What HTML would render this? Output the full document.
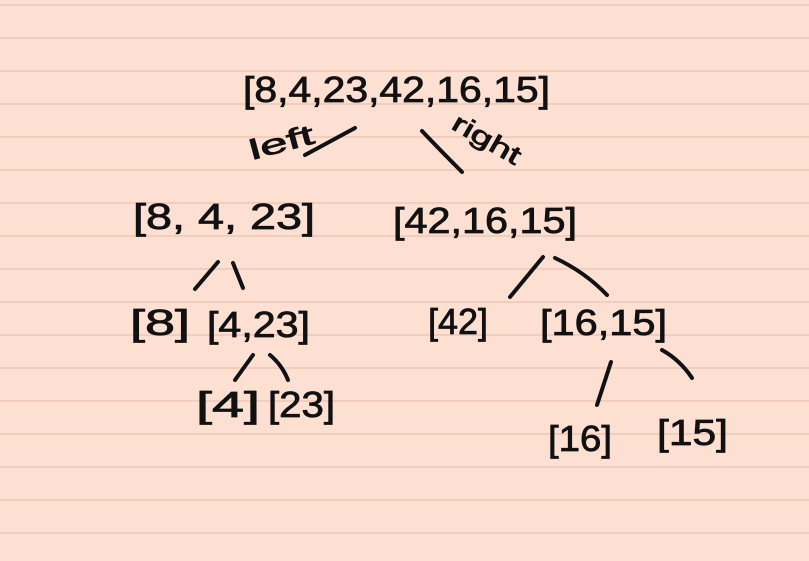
<!DOCTYPE html>
<html><head><style>
html,body{margin:0;padding:0}
body{width:809px;height:561px;overflow:hidden;background:#fde0d2;
background-image:repeating-linear-gradient(to bottom,transparent 0,transparent 4px,#f2cdbe 4px,#f2cdbe 6px,transparent 6px,transparent 33px);}
svg{position:absolute;left:0;top:0}
text{font-family:"Liberation Sans",sans-serif;fill:#111;stroke:#111;stroke-width:0.8}
</style></head><body>
<svg width="809" height="561" viewBox="0 0 809 561">
<g font-size="36">
<text x="243" y="102" textLength="307" lengthAdjust="spacingAndGlyphs">[8,4,23,42,16,15]</text>
<text x="133" y="229" textLength="182" lengthAdjust="spacingAndGlyphs">[8, 4, 23]</text>
<text x="393" y="233" textLength="184" lengthAdjust="spacingAndGlyphs">[42,16,15]</text>
<text x="130" y="335" textLength="60" lengthAdjust="spacingAndGlyphs">[8]</text>
<text x="207" y="337" textLength="103" lengthAdjust="spacingAndGlyphs">[4,23]</text>
<text x="428" y="334" textLength="60" lengthAdjust="spacingAndGlyphs">[42]</text>
<text x="540" y="335" textLength="127" lengthAdjust="spacingAndGlyphs">[16,15]</text>
<text x="196" y="417" textLength="64" lengthAdjust="spacingAndGlyphs">[4]</text>
<text x="268" y="417" textLength="67" lengthAdjust="spacingAndGlyphs">[23]</text>
<text x="548" y="451" textLength="64" lengthAdjust="spacingAndGlyphs">[16]</text>
<text x="657" y="445" textLength="71" lengthAdjust="spacingAndGlyphs">[15]</text>
</g>
<text font-size="28" transform="translate(252,160) rotate(-15)" textLength="66" lengthAdjust="spacingAndGlyphs">left</text>
<text font-size="26" transform="translate(450,128) rotate(30)" textLength="75" lengthAdjust="spacingAndGlyphs">right</text>
<g stroke="#111" stroke-width="4" stroke-linecap="round" fill="none">
<path d="M355 128 L305 155"/>
<path d="M422 131 Q440 150 462 172"/>
<path d="M218 262 L195 289"/>
<path d="M233 263 L243 288"/>
<path d="M543 257 L510 297"/>
<path d="M555 258 Q585 272 607 295"/>
<path d="M253 355 L235 380"/>
<path d="M270 355 Q282 365 288 380"/>
<path d="M611 362 L597 405"/>
<path d="M662 350 Q680 360 692 378"/>
</g>
</svg>
</body></html>
